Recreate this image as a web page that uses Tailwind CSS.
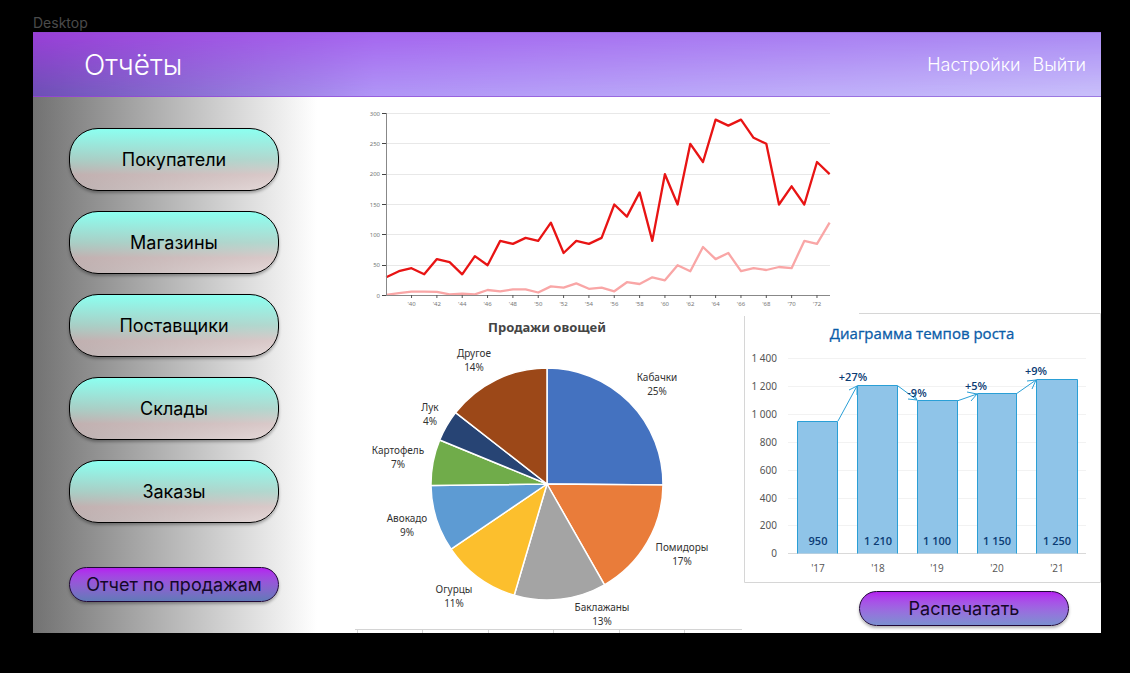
<!DOCTYPE html>
<html lang="ru">
<head>
<meta charset="utf-8">
<meta name="viewport" content="width=device-width, initial-scale=1">
<title>Отчёты</title>
<script src="https://cdn.jsdelivr.net/npm/@tailwindcss/browser@4"></script>
</head>
<body class="min-h-screen bg-black pt-3.5 pr-[29px] pl-[33px] font-['Inter',sans-serif] text-black">
<p class="h-[18px] text-sm leading-[18px] text-[#4b4b4b]">Desktop</p>
<div class="bg-white">
  <header class="relative isolate flex h-[65px] items-center justify-between border-y border-[#7a50b8]/30 bg-linear-to-r from-[#9a3fd8] via-[#a566ef] via-[32%] to-[#ab8cf4] pt-px pr-[15px] pl-[51px] text-white before:absolute before:inset-0 before:-z-10 before:bg-linear-to-r before:from-[#6c50b4] before:via-[#b096f6] before:via-[32%] before:to-[#c9c0fa] before:[mask-image:linear-gradient(to_bottom,transparent,black)]">
    <h1 class="text-[28px] leading-8 font-light">Отчёты</h1>
    <nav class="flex gap-3 text-lg font-light">
      <a href="#settings">Настройки</a>
      <a href="#logout">Выйти</a>
    </nav>
  </header>
  <div class="flex">
    <aside class="flex w-[322px] shrink-0 flex-col gap-5 bg-[linear-gradient(to_right,#727272,#ffffff_284px)] pt-[31px] pr-[76px] pb-[31px] pl-9 text-lg">
      <button type="button" class="h-[63px] rounded-[29px] border border-black bg-[linear-gradient(to_bottom,#8cfff0,rgba(172,214,204,0.9)_50%,rgba(212,190,190,0.75)_75%,rgba(225,205,205,0.6))] shadow-[0_2px_3px_rgba(0,0,0,0.3)]">Покупатели</button>
      <button type="button" class="h-[63px] rounded-[29px] border border-black bg-[linear-gradient(to_bottom,#8cfff0,rgba(172,214,204,0.9)_50%,rgba(212,190,190,0.75)_75%,rgba(225,205,205,0.6))] shadow-[0_2px_3px_rgba(0,0,0,0.3)]">Магазины</button>
      <button type="button" class="h-[63px] rounded-[29px] border border-black bg-[linear-gradient(to_bottom,#8cfff0,rgba(172,214,204,0.9)_50%,rgba(212,190,190,0.75)_75%,rgba(225,205,205,0.6))] shadow-[0_2px_3px_rgba(0,0,0,0.3)]">Поставщики</button>
      <button type="button" class="h-[63px] rounded-[29px] border border-black bg-[linear-gradient(to_bottom,#8cfff0,rgba(172,214,204,0.9)_50%,rgba(212,190,190,0.75)_75%,rgba(225,205,205,0.6))] shadow-[0_2px_3px_rgba(0,0,0,0.3)]">Склады</button>
      <button type="button" class="h-[63px] rounded-[29px] border border-black bg-[linear-gradient(to_bottom,#8cfff0,rgba(172,214,204,0.9)_50%,rgba(212,190,190,0.75)_75%,rgba(225,205,205,0.6))] shadow-[0_2px_3px_rgba(0,0,0,0.3)]">Заказы</button>
      <button type="button" class="mt-auto h-[35px] rounded-full border border-[#200838] bg-linear-to-b from-[#b41df0] to-[#6079b8] whitespace-nowrap text-[#140828] shadow-[0_2px_3px_rgba(0,0,0,0.3)]">Отчет по продажам</button>
    </aside>
    <main class="min-w-0 flex-1">
      <div class="grid grid-cols-[478fr_268fr]">
        <svg viewBox="355 97 478 216" class="block h-auto w-full font-['Noto_Sans',sans-serif]" role="img" aria-label="Динамика по годам">
          <path d="M386 113.5H830M386 143.5H830M386 174.5H830M386 204.5H830M386 234.5H830M386 265.5H830" stroke="#e8e8e8" fill="none"/>
          <g fill="none" stroke-width="2.3" stroke-linejoin="round">
            <polyline id="pink" stroke="#f9a6a6"/>
            <polyline id="red" stroke="#e81414"/>
          </g>
          <path d="M386.5 113V295.5M386 295.5H830" stroke="#888" fill="none"/>
          <path d="M382 113.5h4M382 143.5h4M382 174.5h4M382 204.5h4M382 234.5h4M382 265.5h4M382 295.5h4" stroke="#444"/>
          <path id="ticks" stroke="#555"/>
          <g font-size="6" fill="#777" text-anchor="end">
            <text x="380" y="116">300</text><text x="380" y="146">250</text><text x="380" y="176">200</text><text x="380" y="207">150</text><text x="380" y="237">100</text><text x="380" y="267">50</text><text x="380" y="298">0</text>
          </g>
          <g id="years" font-size="6" fill="#777" text-anchor="middle"></g>
        </svg>
      </div>
      <div class="grid grid-cols-[389fr_357fr]">
        <svg viewBox="355 313 389 320" class="block h-auto w-full font-['Noto_Sans',sans-serif]" role="img" aria-label="Продажи овощей">
          <text x="547" y="332" font-size="13" font-weight="700" fill="#444" text-anchor="middle">Продажи овощей</text>
          <g stroke="#fff" stroke-width="1.5" stroke-linejoin="round">
            <path fill="#4472c0" d="M547 484V368A116 116 0 0 1 663 485Z"/>
            <path fill="#e97c3a" d="M547 484L663 485A116 116 0 0 1 604.5 584.8Z"/>
            <path fill="#a4a4a4" d="M547 484L604.5 584.8A116 116 0 0 1 514.2 595.3Z"/>
            <path fill="#fcbf2d" d="M547 484L514.2 595.3A116 116 0 0 1 451.1 549.2Z"/>
            <path fill="#5d9bd3" d="M547 484L451.1 549.2A116 116 0 0 1 431 485.4Z"/>
            <path fill="#70ac4a" d="M547 484L431 485.4A116 116 0 0 1 439.7 440Z"/>
            <path fill="#274474" d="M547 484L439.7 440A116 116 0 0 1 455.6 412.6Z"/>
            <path fill="#9c4818" d="M547 484L455.6 412.6A116 116 0 0 1 547 368Z"/>
          </g>
          <g font-size="10" fill="#333" text-anchor="middle">
            <text x="474" y="357">Другое</text><text x="474" y="371">14%</text>
            <text x="657" y="381">Кабачки</text><text x="657" y="395">25%</text>
            <text x="430" y="411">Лук</text><text x="430" y="425">4%</text>
            <text x="398" y="454">Картофель</text><text x="398" y="468">7%</text>
            <text x="407" y="522">Авокадо</text><text x="407" y="536">9%</text>
            <text x="454" y="593">Огурцы</text><text x="454" y="607">11%</text>
            <text x="682" y="551">Помидоры</text><text x="682" y="565">17%</text>
            <text x="602" y="611">Баклажаны</text><text x="602" y="625">13%</text>
          </g>
          <path d="M355 629.5H742M357.5 629v4M422.5 629v4M488.5 629v4M553.5 629v4M619.5 629v4M684.5 629v4" stroke="#d4d4d4"/>
        </svg>
        <div>
          <svg viewBox="744 313 357 270" class="block h-auto w-full font-['Open_Sans',sans-serif]" role="img" aria-label="Диаграмма темпов роста">
            <path d="M859 313.5H1100.5V582.5H744.5V316" fill="none" stroke="#d6d6d6"/>
            <text x="922" y="339" font-size="15" fill="#0a5ca8" stroke="#0a5ca8" stroke-width=".3" text-anchor="middle">Диаграмма темпов роста</text>
            <path d="M788 358.5H1086M788 386.5H1086M788 414.5H1086M788 442.5H1086M788 470.5H1086M788 498.5H1086M788 525.5H1086" stroke="#f2f2f2"/>
            <path d="M788 553.5H1086" stroke="#d9d9d9"/>
            <g fill="#8fc4e8" stroke="#2a9fd6">
              <path d="M797.5 553.5V421.5H837.5V553.5"/>
              <path d="M857.5 553.5V385.5H897.5V553.5"/>
              <path d="M917.5 553.5V400.5H957.5V553.5"/>
              <path d="M977.5 553.5V393.5H1016.5V553.5"/>
              <path d="M1036.5 553.5V379.5H1077.5V553.5"/>
            </g>
            <path fill="none" stroke="#2a9fd6" d="M838 421L857 386M849 390L857 386L857 395M898 386L917 400M908 399L917 400L913 392M957 401L977 394M967 392L977 394L971 401M1016 394L1036 380M1027 381L1036 380L1032 389"/>
            <g font-size="10" fill="#555" text-anchor="end" class="font-['Noto_Sans',sans-serif]">
              <text x="777" y="362">1 400</text><text x="777" y="390">1 200</text><text x="777" y="418">1 000</text><text x="777" y="446">800</text><text x="777" y="474">600</text><text x="777" y="502">400</text><text x="777" y="529">200</text><text x="777" y="557">0</text>
            </g>
            <g font-size="10" fill="#555" text-anchor="middle">
              <text x="818" y="572">'17</text><text x="878" y="572">'18</text><text x="937" y="572">'19</text><text x="997" y="572">'20</text><text x="1057" y="572">'21</text>
            </g>
            <g font-size="11" font-weight="600" fill="#0b3c74" text-anchor="middle">
              <text x="818" y="545">950</text><text x="878" y="545">1 210</text><text x="937" y="545">1 100</text><text x="997" y="545">1 150</text><text x="1057" y="545">1 250</text>
              <text x="853" y="381">+27%</text><text x="917" y="397">-9%</text><text x="976" y="390">+5%</text><text x="1036" y="375">+9%</text>
            </g>
          </svg>
          <div class="flex justify-end pt-2 pr-8">
            <button type="button" class="h-[35px] w-[210px] rounded-full border border-[#200838] bg-linear-to-b from-[#b41df0] to-[#7a8fd0] text-lg text-[#140828] shadow-[0_2px_3px_rgba(0,0,0,0.3)]">Распечатать</button>
          </div>
        </div>
      </div>
    </main>
  </div>
</div>
<script>
  // Yearly series, 1938–1973
  const red = [30,40,45,35,60,55,35,65,50,90,85,95,90,120,70,90,85,95,150,130,170,90,200,150,250,220,290,280,290,260,250,150,180,150,220,200];
  const pink = [1,4,6.5,6.5,6,2,3,2,9,7,10,10,5,15,13,20,11,13,7,22,19,30,25,50,40,80,60,70,40,45,42,47,45,90,85,120];
  const px = i => 386.2 + i * 12.67;
  const toPoints = s => s.map((v, i) => px(i).toFixed(1) + ',' + (295.5 - v * 0.6067).toFixed(1)).join(' ');
  document.getElementById('red').setAttribute('points', toPoints(red));
  document.getElementById('pink').setAttribute('points', toPoints(pink));
  let ticks = '', years = '';
  for (let i = 2; i <= 34; i += 2) {
    ticks += `M${px(i)} 295v3`;
    years += `<text x="${px(i)}" y="306">'${38 + i}</text>`;
  }
  document.getElementById('ticks').setAttribute('d', ticks);
  document.getElementById('years').innerHTML = years;
</script>
</body>
</html>
